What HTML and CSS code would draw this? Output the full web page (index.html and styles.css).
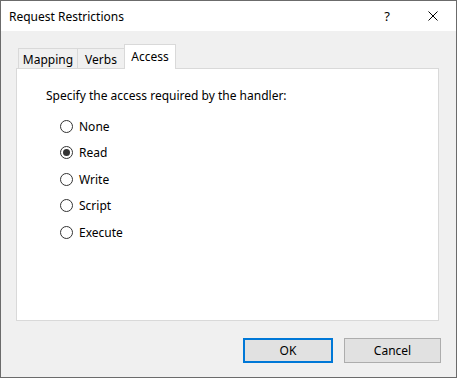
FILE: index.html
```html
<!DOCTYPE html>
<html lang="en">
<head>
    <meta charset="UTF-8">
    <title>Request Restrictions</title>
    <link rel="stylesheet" href="styles.css">
</head>
<body>
    <div class="window">
        <div class="titlebar">
            <div class="title">Request Restrictions</div>
            <div class="caption-btn help">?</div>
            <div class="caption-btn close">
                <svg width="10" height="10" viewBox="0 0 10 10"><path d="M0.5 0.5 L9.5 9.5 M9.5 0.5 L0.5 9.5" stroke="#000" stroke-width="1" fill="none"/></svg>
            </div>
        </div>
        <div class="dialog-body">
            <div class="tabs">
                <div class="tab tab-mapping">Mapping</div>
                <div class="tab tab-verbs">Verbs</div>
                <div class="tab tab-access selected">Access</div>
            </div>
            <div class="panel">
                <div class="prompt">Specify the access required by the handler:</div>
                <div class="radios">
                    <div class="radio-row"><span class="radio"></span><span>None</span></div>
                    <div class="radio-row"><span class="radio checked"></span><span>Read</span></div>
                    <div class="radio-row"><span class="radio"></span><span>Write</span></div>
                    <div class="radio-row"><span class="radio"></span><span>Script</span></div>
                    <div class="radio-row"><span class="radio"></span><span>Execute</span></div>
                </div>
            </div>
            <div class="buttons">
                <button class="btn btn-ok">OK</button>
                <button class="btn btn-cancel">Cancel</button>
            </div>
        </div>
    </div>
</body>
</html>
```

FILE: styles.css
```css
body, html {
    margin: 0;
    padding: 0;
    font-family: 'Noto Sans', 'Open Sans', Arial, sans-serif;
    font-size: 12px;
    color: #000;
}
.window {
    width: 457px;
    height: 378px;
    box-sizing: border-box;
    border: 1px solid #6b6b6b;
    display: flex;
    flex-direction: column;
    background-color: #f0f0f0;
}
.titlebar {
    height: 30px;
    background-color: #fff;
    display: flex;
    align-items: center;
    flex-shrink: 0;
}
.title {
    flex: 1;
    padding-left: 8px;
    font-size: 12px;
}
.caption-btn {
    width: 46px;
    height: 30px;
    display: flex;
    align-items: center;
    justify-content: center;
}
.help {
    font-size: 13px;
}
.dialog-body {
    flex: 1;
    padding: 13px 17px 0 15px;
    display: flex;
    flex-direction: column;
}
.tabs {
    display: flex;
    align-items: flex-end;
    height: 24px;
    padding-left: 2px;
}
.tab {
    box-sizing: border-box;
    height: 20px;
    border: 1px solid #d9d9d9;
    border-bottom: none;
    background-color: #f0f0f0;
    display: flex;
    align-items: center;
    justify-content: center;
    padding-top: 1px;
}
.tab-mapping {
    width: 60px;
}
.tab-verbs {
    width: 48px;
    margin-left: -1px;
}
.tab-access {
    width: 52px;
    margin-left: -1px;
}
.tab.selected {
    height: 25px;
    background-color: #fff;
    margin-bottom: -1px;
    position: relative;
    z-index: 1;
    padding-top: 0;
    padding-bottom: 2px;
}
.panel {
    box-sizing: border-box;
    height: 253px;
    background-color: #fff;
    border: 1px solid #d9d9d9;
    padding: 19px 0 0 29px;
}
.prompt {
    line-height: 16px;
}
.radios {
    margin-top: 9px;
    margin-left: 14px;
}
.radio-row {
    height: 26.5px;
    display: flex;
    align-items: center;
}
.radio {
    box-sizing: border-box;
    width: 13px;
    height: 13px;
    border: 1px solid #333;
    border-radius: 50%;
    margin-right: 6px;
    display: flex;
    align-items: center;
    justify-content: center;
}
.radio.checked::after {
    content: "";
    width: 7px;
    height: 7px;
    border-radius: 50%;
    background-color: #333;
}
.buttons {
    display: flex;
    justify-content: flex-end;
    gap: 11px;
    margin-top: 17px;
    margin-right: -2px;
}
.btn {
    box-sizing: border-box;
    height: 25px;
    background-color: #e1e1e1;
    border: 1px solid #adadad;
    font-family: 'Noto Sans', 'Open Sans', Arial, sans-serif;
    font-size: 12px;
    color: #000;
    padding: 0;
}
.btn-ok {
    width: 90px;
    border: 2px solid #0078d7;
}
.btn-cancel {
    width: 97px;
}
```
